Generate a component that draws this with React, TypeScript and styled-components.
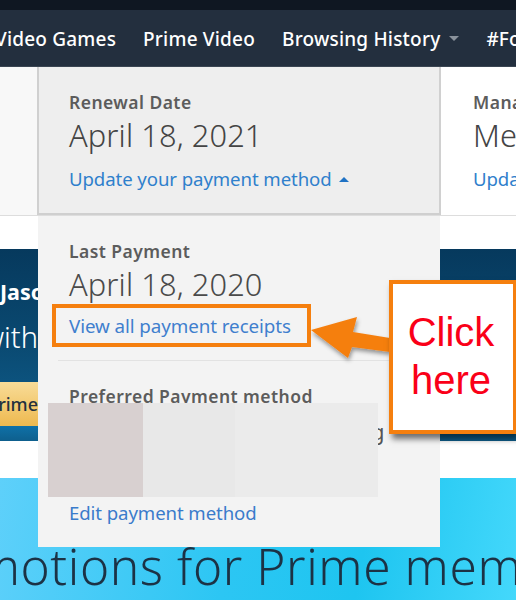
import React from "react";
import styled, { createGlobalStyle } from "styled-components";

const GlobalStyle = createGlobalStyle`
  html, body {
    margin: 0;
    padding: 0;
    background: #fff;
  }
  body {
    font-family: "Noto Sans", "Liberation Sans", sans-serif;
  }
`;

const Page = styled.div`
  position: relative;
  width: 516px;
  height: 600px;
  overflow: hidden;
  background: #fff;
`;

const TopStrip = styled.div`
  height: 10px;
  background: #0f1722;
`;

const Nav = styled.nav`
  height: 57px;
  box-sizing: border-box;
  padding-top: 1px;
  display: flex;
  align-items: center;
  gap: 27px;
  background: #232f3e;
  border-bottom: 1px solid #3a4552;
  overflow: hidden;
`;

const NavItem = styled.span<{ $offset?: number }>`
  flex: none;
  margin-left: ${(p) => p.$offset ?? 0}px;
  display: flex;
  align-items: center;
  gap: 9px;
  color: #fff;
  font-size: 19px;
  font-weight: 500;
  letter-spacing: 0.2px;
  white-space: nowrap;
`;

const Caret = styled.span<{ $up?: boolean; $color: string }>`
  width: 0;
  height: 0;
  border-left: 5px solid transparent;
  border-right: 5px solid transparent;
  ${(p) =>
    p.$up
      ? `border-bottom: 5px solid ${p.$color};`
      : `border-top: 5px solid ${p.$color};`}
`;

const Summary = styled.div`
  height: 149px;
  display: grid;
  grid-template-columns: 37px 404px 1fr;
  background: #fff;
  border-bottom: 1px solid #ddd;
  box-sizing: border-box;
`;

const SummaryEdge = styled.div`
  background: #f8f8f8;
`;

const SummaryCell = styled.div<{ $active?: boolean }>`
  box-sizing: border-box;
  padding: 25px 0 0 ${(p) => (p.$active ? 30 : 32)}px;
  overflow: hidden;
  white-space: nowrap;
  background: ${(p) => (p.$active ? "#eeeeee" : "#fff")};
  border-left: ${(p) => (p.$active ? "2px solid #d0d0d0" : "none")};
  border-right: ${(p) => (p.$active ? "2px solid #d0d0d0" : "none")};
  border-bottom: ${(p) => (p.$active ? "2px solid #cfcfcf" : "none")};
`;

const Label = styled.div`
  height: 20px;
  line-height: 20px;
  font-size: 17.5px;
  font-weight: 600;
  letter-spacing: 0.45px;
  white-space: nowrap;
  color: #5c5c5c;
`;

const DateText = styled.div`
  height: 40px;
  margin-top: 3px;
  line-height: 40px;
  font-size: 30.8px;
  font-weight: 300;
  letter-spacing: 0.1px;
  color: #444;
`;

const ActionLink = styled.a`
  display: flex;
  align-items: center;
  gap: 7px;
  height: 22px;
  line-height: 22px;
  font-size: 18.6px;
  letter-spacing: -0.08px;
  white-space: nowrap;
  color: #2f80cc;
`;

const SummaryLink = styled(ActionLink)`
  margin-top: 13px;
`;

const ReceiptLink = styled(ActionLink)`
  font-size: 18.8px;
  color: #3f7fce;
`;

const Gap = styled.div<{ $h: number }>`
  height: ${(p) => p.$h}px;
  background: #fff;
`;

const Banner = styled.section`
  height: 192px;
  display: flex;
  flex-direction: column;
  background: linear-gradient(180deg, #06395d 0%, #0a4a72 50%, #0f6090 100%);
`;

const BannerBody = styled.div`
  height: 133px;
  width: 38px;
  overflow: hidden;
  white-space: nowrap;
  color: #fff;
  display: flex;
  flex-direction: column;
  align-items: flex-end;
`;

const BannerName = styled.div`
  margin-top: 30px;
  font-size: 21.5px;
  line-height: 26px;
  font-weight: 700;
  align-self: flex-start;
`;

const BannerLine = styled.div`
  margin-top: 15px;
  font-size: 29px;
  line-height: 34px;
  font-weight: 300;
  align-self: flex-end;
`;

const PrimeButton = styled.div`
  height: 44px;
  width: 38px;
  overflow: hidden;
  display: flex;
  align-items: center;
  justify-content: flex-end;
  background: linear-gradient(180deg, #f8dc98 0%, #eeb94f 100%);
  color: #22303e;
  font-size: 18px;
  font-weight: 500;
`;

const BannerFoot = styled.div`
  height: 15px;
  background: linear-gradient(180deg, #0f71a8, #0e5f8d);
`;

const Promo = styled.section`
  height: 122px;
  overflow: hidden;
  background: linear-gradient(100deg, #5ed0fa 0%, #2cc6f3 45%, #1ec5f0 70%, #44d8fb 100%);
`;

const PromoTitle = styled.div`
  margin: 56px 0 0 -103px;
  font-size: 49.5px;
  line-height: 64px;
  font-weight: 300;
  letter-spacing: 0.6px;
  color: #1c3245;
  white-space: nowrap;
`;

const Dropdown = styled.div`
  position: absolute;
  left: 38px;
  top: 216px;
  width: 402px;
  height: 331px;
  box-sizing: border-box;
  padding: 25px 0 0 31px;
  background: #f3f3f3;
`;

const DropdownDate = styled(DateText)`
  color: #4a4a4a;
`;

const LinkFrame = styled.div`
  width: 259px;
  height: 43px;
  margin-left: -17px;
  box-sizing: border-box;
  border: 4px solid #f57f0e;
  padding-left: 13px;
  display: flex;
  align-items: center;
`;

const Divider = styled.hr`
  margin: 13px 20px 0 -11px;
  border: 0;
  border-top: 1px solid #e2e2e2;
`;

const PreferredLabel = styled(Label)`
  margin-top: 25px;
`;

const CutGlyph = styled.span`
  position: absolute;
  left: 333px;
  top: 203px;
  color: #555;
  font-size: 22px;
  line-height: 24px;
`;

const Redaction = styled.div`
  position: absolute;
  left: 10px;
  top: 187px;
  width: 330px;
  height: 94px;
  display: grid;
  grid-template-columns: 95px 92px 143px;
`;

const RedactionTile = styled.div<{ $color: string }>`
  background: ${(p) => p.$color};
`;

const EditLink = styled(ActionLink)`
  margin-top: 96px;
  color: #3a7bcb;
`;

const Callout = styled.div`
  position: absolute;
  left: 389px;
  top: 280px;
  width: 127px;
  height: 154px;
  box-sizing: border-box;
  border: 4px solid #f57f0e;
  border-right-width: 3px;
  background: #fff;
  box-shadow: 3px 5px 6px rgba(0, 0, 0, 0.55);
  padding: 24px 4px 0 0;
  font-family: "Liberation Sans", Arial, sans-serif;
  font-size: 40px;
  line-height: 48px;
  text-align: center;
  color: #fa0018;
`;

const Arrow = styled.svg`
  position: absolute;
  left: 308px;
  top: 314px;
  overflow: visible;
`;

const App = () => {
  return (
    <Page>
      <GlobalStyle />
      <TopStrip />
      <Nav>
        <NavItem $offset={-5}>Video Games</NavItem>
        <NavItem>Prime Video</NavItem>
        <NavItem>
          Browsing History
          <Caret $color="#8a929b" />
        </NavItem>
        <NavItem>#FoundItOnAmazon</NavItem>
      </Nav>
      <Summary>
        <SummaryEdge />
        <SummaryCell $active>
          <Label>Renewal Date</Label>
          <DateText>April 18, 2021</DateText>
          <SummaryLink>
            Update your payment method
            <Caret $up $color="#1f72c4" />
          </SummaryLink>
        </SummaryCell>
        <SummaryCell>
          <Label>Manage</Label>
          <DateText>Membership</DateText>
          <SummaryLink>Update</SummaryLink>
        </SummaryCell>
      </Summary>
      <Gap $h={33} />
      <Banner>
        <BannerBody>
          <BannerName>Jason</BannerName>
          <BannerLine>with</BannerLine>
        </BannerBody>
        <PrimeButton>Prime</PrimeButton>
        <BannerFoot />
      </Banner>
      <Gap $h={37} />
      <Promo>
        <PromoTitle>Promotions for Prime members</PromoTitle>
      </Promo>

      <Dropdown>
        <Label>Last Payment</Label>
        <DropdownDate>April 18, 2020</DropdownDate>
        <LinkFrame>
          <ReceiptLink>View all payment receipts</ReceiptLink>
        </LinkFrame>
        <Divider />
        <PreferredLabel>Preferred Payment method</PreferredLabel>
        <CutGlyph>g</CutGlyph>
        <Redaction>
          <RedactionTile $color="#d8d0d0" />
          <RedactionTile $color="#e8e8e8" />
          <RedactionTile $color="#ebebeb" />
        </Redaction>
        <EditLink>Edit payment method</EditLink>
      </Dropdown>

      <Arrow width="82" height="52" viewBox="0 0 82 52">
        <defs>
          <filter id="arrowShadow" x="-20%" y="-20%" width="140%" height="160%">
            <feDropShadow dx="1" dy="3" stdDeviation="2" floodColor="#000" floodOpacity="0.4" />
          </filter>
        </defs>
        <path
          d="M3 16 L49 3 L45 18 L82 24 L82 38 L44 33 L40 44 Z"
          fill="#f57f0e"
          filter="url(#arrowShadow)"
        />
      </Arrow>
      <Callout>
        Click
        <br />
        here
      </Callout>
    </Page>
  );
};

export default App;
